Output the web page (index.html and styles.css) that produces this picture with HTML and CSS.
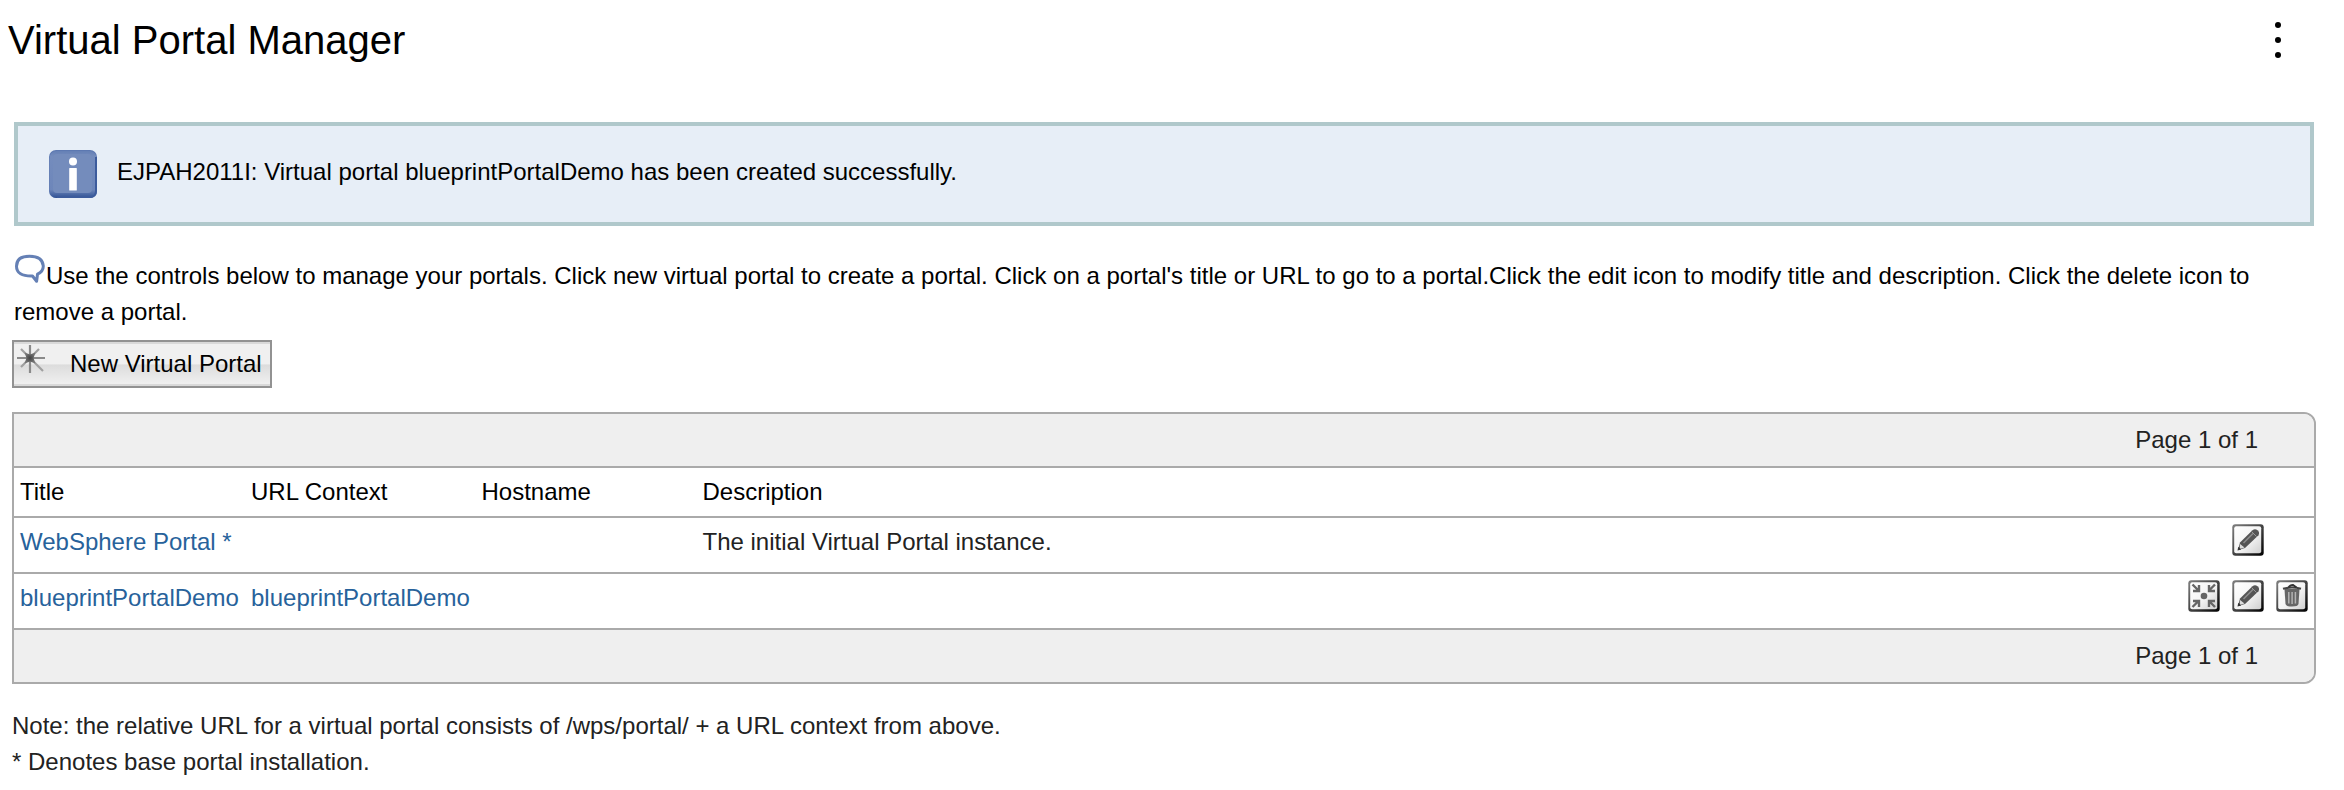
FILE: index.html
```html
<!DOCTYPE html>
<html lang="en">
<head>
<meta charset="utf-8">
<title>Virtual Portal Manager</title>
<link rel="stylesheet" href="styles.css">
</head>
<body>
<svg class="defs" width="0" height="0" aria-hidden="true">
  <defs>
    <linearGradient id="face" x1="0" y1="0" x2="1" y2="1"><stop offset="0" stop-color="#fff"/><stop offset=".55" stop-color="#f4f4f4"/><stop offset="1" stop-color="#cfcfcf"/></linearGradient>
    <linearGradient id="edge" x1="0" y1="0" x2="1" y2="1"><stop offset="0" stop-color="#808080"/><stop offset=".5" stop-color="#444"/><stop offset="1" stop-color="#000"/></linearGradient>
    <linearGradient id="blue" x1="0" y1="0" x2="0" y2="1"><stop offset="0" stop-color="#6580b5"/><stop offset=".12" stop-color="#748cbd"/><stop offset=".82" stop-color="#6d86ba"/><stop offset="1" stop-color="#2f5093"/></linearGradient>
    <radialGradient id="core"><stop offset="0" stop-color="#444"/><stop offset="1" stop-color="#777"/></radialGradient>
    <symbol id="tile" viewBox="0 0 32 32">
      <rect x=".3" y=".3" width="31.4" height="31.4" rx="3" fill="url(#edge)"/>
      <rect x="2.200" y="2.200" width="27" height="27" rx="2" fill="url(#face)"/>
    </symbol>
    <symbol id="edit" viewBox="0 0 32 32">
      <use href="#tile"/>
      <path d="M6 26l2-7.500L20.500 6.300q2.500-2 5 0t1 5L13 24z" fill="#555"/>
      <path d="M8 20l4.500 3.500-4.800 1.600z" fill="#ddd"/>
      <path d="M11.500 19L21 9.500" stroke="#8c8c8c" stroke-width="1.600"/>
      <path d="M20 8l4.500 4.500" stroke="#999" stroke-width="1"/>
      <path d="M5.500 26.600l.8-3.800 3 2.600z" fill="#333"/>
    </symbol>
    <symbol id="rescope" viewBox="0 0 32 32">
      <use href="#tile"/>
      <g fill="none" stroke="#666" stroke-width="2.400">
        <path d="M4.500 4.500l6 6M5 11h6V5"/><path d="M27 4.500l-6 6M27 11h-6V5"/>
        <path d="M4.500 27l6-6M5 21h6v6"/><path d="M27 27l-6-6M27 21h-6v6"/>
      </g>
      <circle cx="16" cy="16" r="3.300" fill="#666"/>
    </symbol>
    <symbol id="trash" viewBox="0 0 32 32">
      <use href="#tile"/>
      <path d="M8.500 9h15l-1 15q-.5 2.500-6.500 2.500T9.500 24z" fill="#666"/>
      <path d="M12.800 12v11.500M16.100 12v12M19.400 12v11.500" stroke="#b4b4b4" stroke-width="1.500"/>
      <path d="M7 8.800q9-2.600 18 0" fill="none" stroke="#444" stroke-width="2.200"/>
      <path d="M12.500 7.500Q14 5 17 5l3.500 2.500" fill="none" stroke="#333" stroke-width="2"/>
    </symbol>
  </defs>
</svg>
<header class="titlebar">
  <h1 class="title">Virtual Portal Manager</h1>
  <svg class="menu" viewBox="0 0 6 36"><circle cx="3" cy="3" r="3"/><circle cx="3" cy="18" r="3"/><circle cx="3" cy="33" r="3"/></svg>
</header>
<main class="content">
  <div class="message">
    <svg class="info" viewBox="0 0 48 48">
      <rect width="48" height="48" rx="7" fill="#5c78b1"/>
      <rect x=".5" y="1" width="47" height="47" rx="7" fill="url(#blue)"/>
      <path d="M47 7v34q0 6-6 6H8" fill="none" stroke="#3c5b9c" stroke-width="2"/>
      <rect x="4" y="4" width="39" height="39" rx="4" fill="#748cbc"/>
      <circle cx="24" cy="11.500" r="4" fill="#fff"/>
      <rect x="20.200" y="18" width="7.600" height="22.500" rx=".6" fill="#fff"/>
    </svg>
    <span>EJPAH2011I: Virtual portal blueprintPortalDemo has been created successfully.</span>
  </div>
  <p class="help"><svg class="bubble" viewBox="0 0 32 32"><path d="M22.600 27.200L18.500 22Q2.500 22.500 2.500 12.200 2.500 2.300 15.500 2.300T29.300 12Q29.300 17.500 23.500 20.200z" fill="#fff" stroke="#6580b5" stroke-width="3" stroke-linejoin="round"/></svg>Use the controls below to manage your portals. Click new virtual portal to create a portal. Click on a portal's title or URL to go to a portal.Click the edit icon to modify title and description. Click the delete icon to remove a portal.</p>
  <button class="new" type="button">
    <svg class="star" viewBox="0 0 30 30"><g stroke="#8a8a8a" stroke-width="2.200"><path d="M15 1v28M2 14h28" /><path d="M6 5l22 22M24 5L6 23" stroke="#a0a0a0"/></g><path d="M9.500 8.500l5.500 2 5.500-2-2 5.500 2 5.500-5.500-2-5.500 2 2-5.500z" fill="url(#core)"/></svg>
    <span>New Virtual Portal</span>
  </button>
  <div class="grid">
    <div class="pager">Page 1 of 1</div>
    <div class="row head"><span>Title</span><span>URL Context</span><span>Hostname</span><span>Description</span></div>
    <div class="row">
      <a class="link">WebSphere Portal *</a><span></span><span></span><span>The initial Virtual Portal instance.</span>
      <div class="actions"><svg class="action edit"><use href="#edit"/></svg></div>
    </div>
    <div class="row">
      <a class="link">blueprintPortalDemo</a><a class="link">blueprintPortalDemo</a><span></span><span></span>
      <div class="actions"><svg class="action"><use href="#rescope"/></svg><svg class="action"><use href="#edit"/></svg><svg class="action"><use href="#trash"/></svg></div>
    </div>
    <div class="pager last">Page 1 of 1</div>
  </div>
  <p class="note">Note: the relative URL for a virtual portal consists of /wps/portal/ + a URL context from above.<br>* Denotes base portal installation.</p>
</main>
</body>
</html>
```
FILE: styles.css
```css
* { box-sizing: border-box; }
body {
  margin: 0;
  background: #fff;
  color: #000;
  font: 24px/36px "Liberation Sans", Arial, sans-serif;
}
svg { display: block; flex: none; }
.defs { position: absolute; }
.titlebar {
  display: flex;
  justify-content: space-between;
  align-items: flex-start;
  height: 122px;
  padding: 17px 63px 0 8px;
}
.title { margin: 0; font-size: 40px; line-height: 46px; font-weight: 400; }
.menu { width: 6px; height: 36px; margin-top: 5px; }
.content { padding: 0 28px 0 12px; }
.message {
  display: flex;
  align-items: flex-start;
  height: 104px;
  margin: 0 2px;
  padding: 24px 31px;
  border: 4px solid #b0c8cb;
  background: #e7eef7;
  gap: 20px;
}
.message span { padding-top: 4px; }
.info { width: 48px; height: 48px; }
.help { height: 72px; margin: 32px 0 0 2px; }
.bubble { display: inline-block; width: 32px; height: 32px; margin: -8px 0 -4px; vertical-align: 2px; }
.new {
  display: flex;
  align-items: flex-start;
  width: 260px;
  height: 48px;
  margin: 10px 0 24px;
  padding: 2px 0 0 2px;
  border: 2px solid #929292;
  background: linear-gradient(#f0f0f0 0 50%, #dcdcdc 52%, #f0f0f0 96%);
  box-shadow: inset 0 2px #d9d9d9, inset 0 -2px #d9d9d9;
  color: #000;
  font: inherit;
  gap: 25px;
  white-space: nowrap;
}
.star { width: 30px; height: 30px; margin-left: -1px; margin-right: 1px; }
.new span { padding-top: 2px; margin-left: -1px; }
.grid {
  height: 272px;
  border: 2px solid #aaa;
  border-radius: 0 12px 12px 0;
  overflow: hidden;
  color: #222;
}
.pager {
  height: 54px;
  padding: 8px 56px 0 0;
  border-bottom: 2px solid #aaa;
  background: #efefef;
  text-align: right;
}
.pager.last { border-bottom: 0; }
.row {
  display: grid;
  grid-template-columns: 231px 230.500px 221px 1fr auto;
  height: 56px;
  padding: 6px 6px 0;
  border-bottom: 2px solid #aaa;
  white-space: nowrap;
}
.head { height: 50px; color: #000; }
.link { color: #27629b; }
.actions { display: flex; gap: 12px; }
.action { width: 32px; height: 32px; }
.action.edit { margin-right: 44px; }
.note { margin: 24px 0 0; color: #222; }
```
